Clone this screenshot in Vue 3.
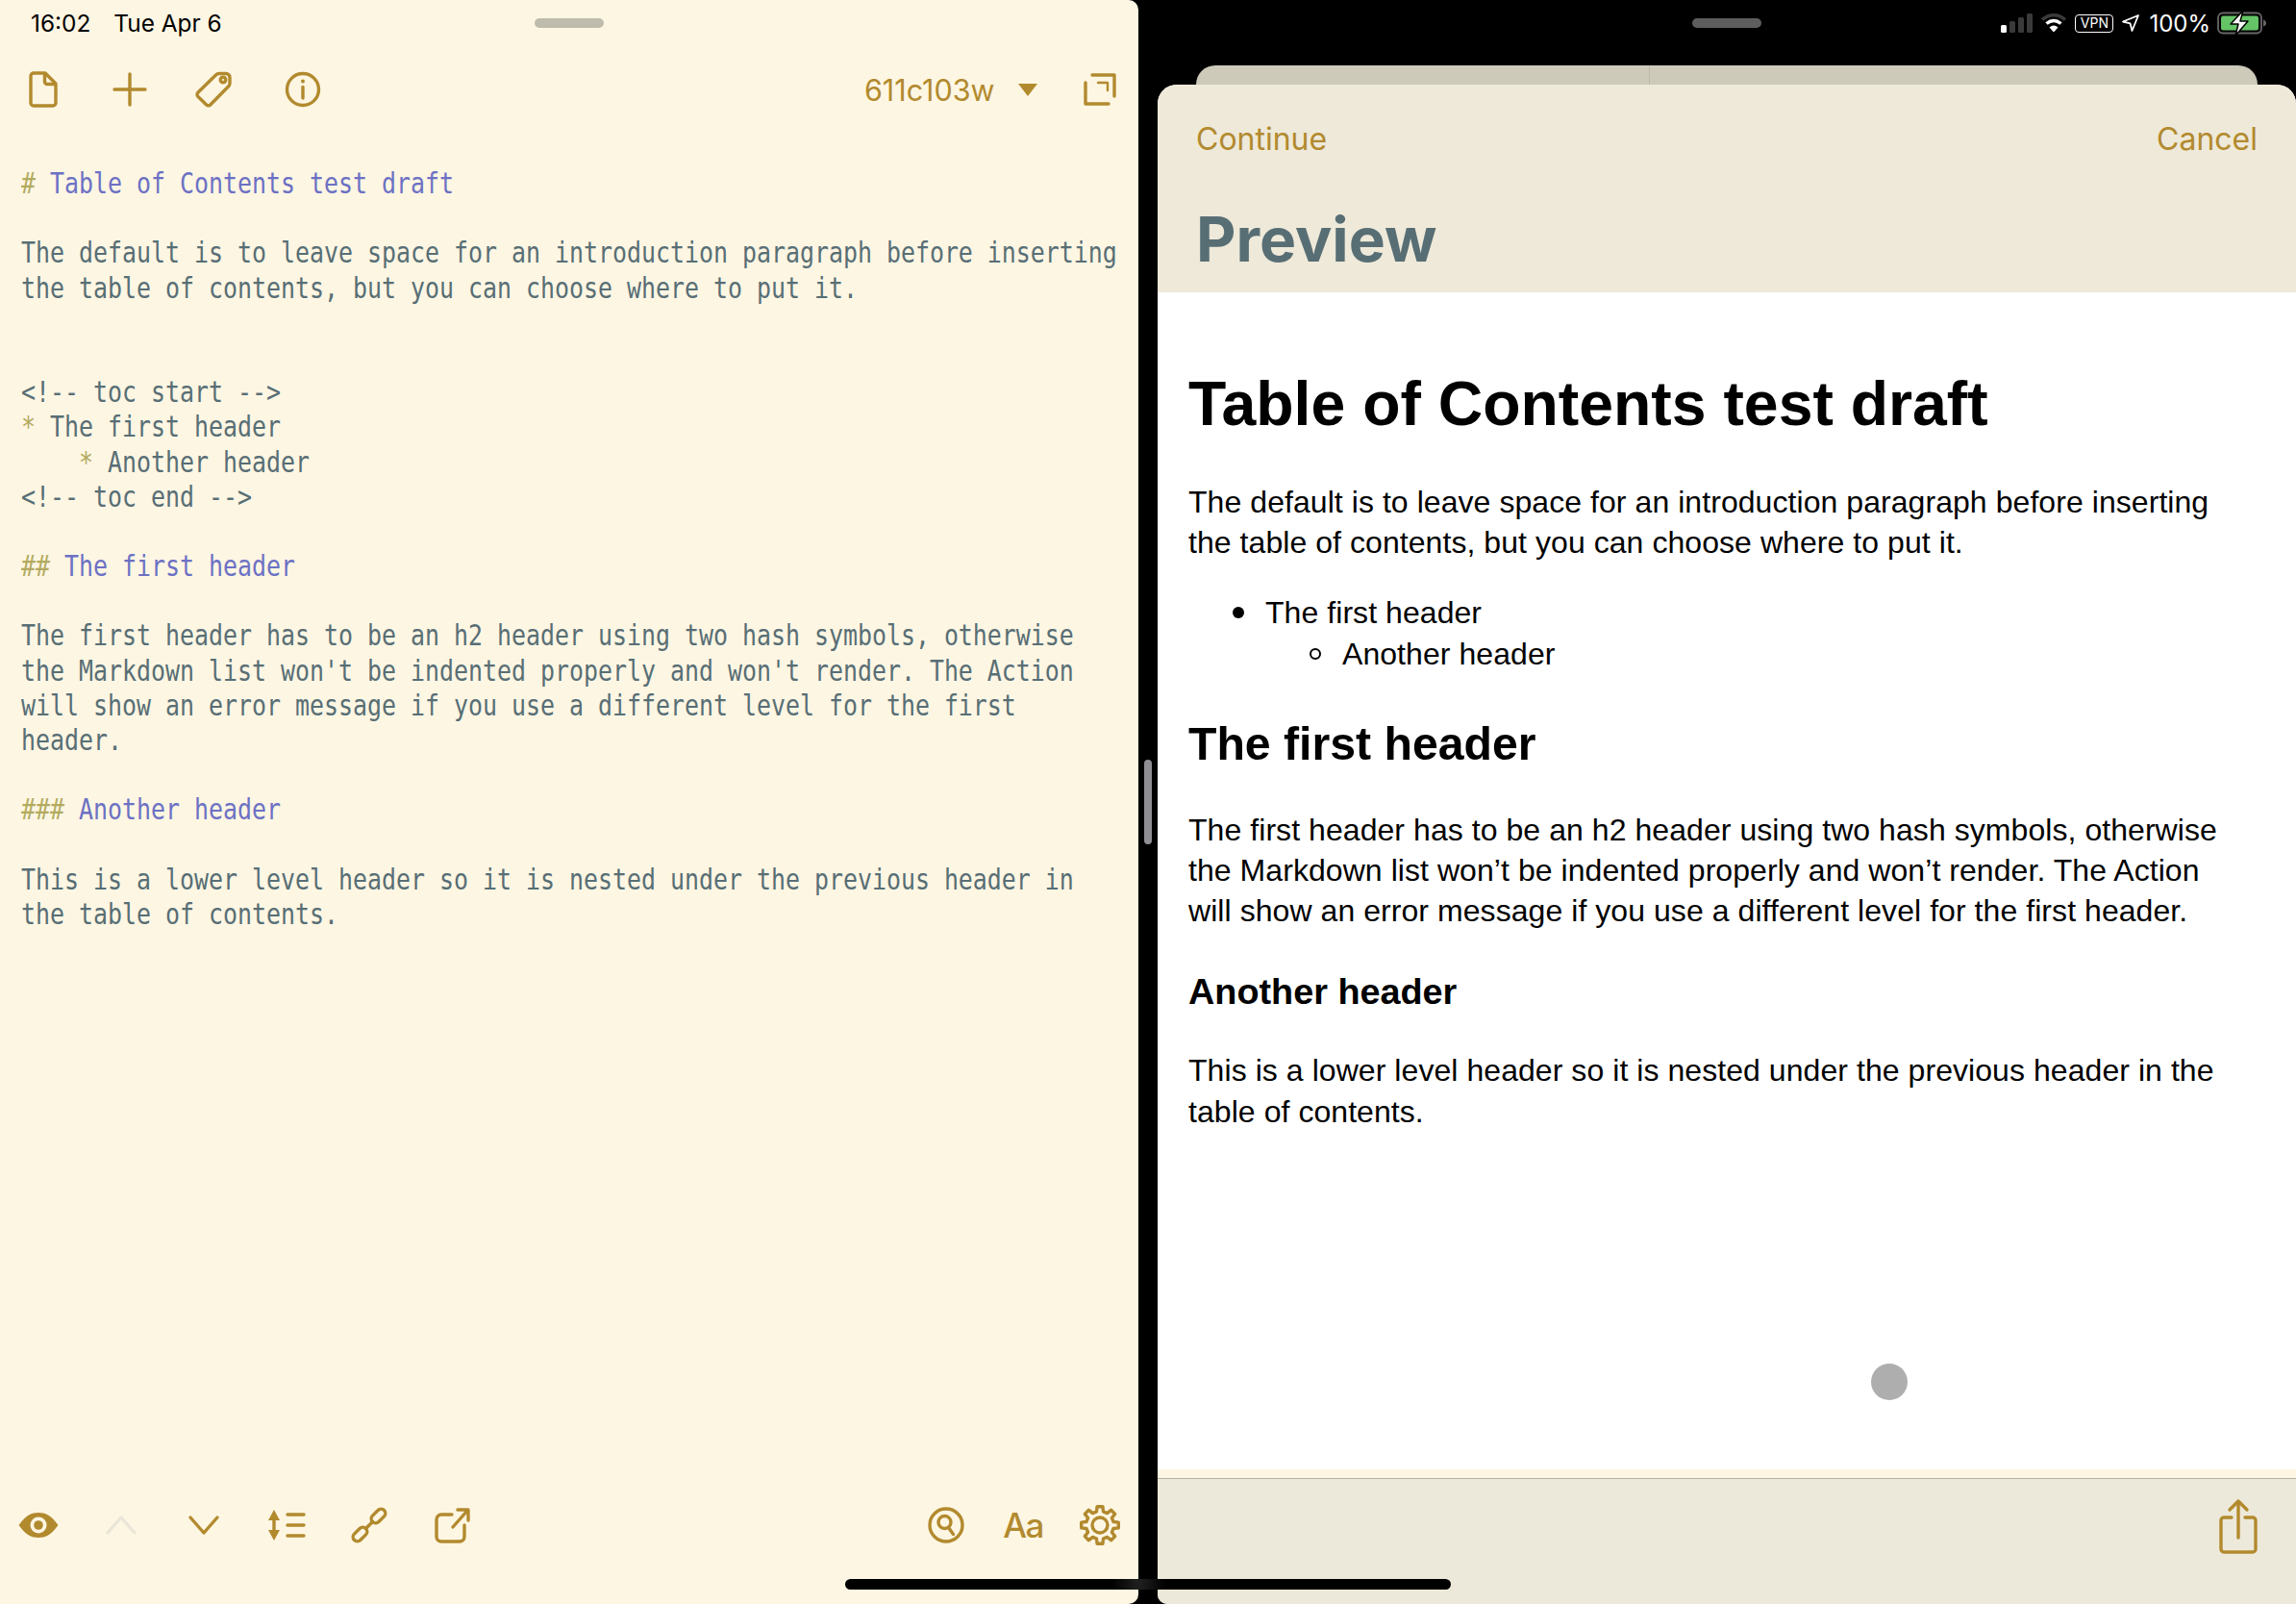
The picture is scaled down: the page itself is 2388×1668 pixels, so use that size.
<script setup>
const lines = [
  [['y', '# '], ['v', 'Table of Contents test draft']],
  [],
  [['t', 'The default is to leave space for an introduction paragraph before inserting']],
  [['t', 'the table of contents, but you can choose where to put it.']],
  [], [],
  [['t', '<!-- toc start -->']],
  [['y', '* '], ['t', 'The first header']],
  [['t', '    '], ['y', '* '], ['t', 'Another header']],
  [['t', '<!-- toc end -->']],
  [],
  [['y', '## '], ['v', 'The first header']],
  [],
  [['t', "The first header has to be an h2 header using two hash symbols, otherwise"]],
  [['t', "the Markdown list won't be indented properly and won't render. The Action"]],
  [['t', 'will show an error message if you use a different level for the first']],
  [['t', 'header.']],
  [],
  [['y', '### '], ['v', 'Another header']],
  [],
  [['t', 'This is a lower level header so it is nested under the previous header in']],
  [['t', 'the table of contents.']],
]

function gearPath() {
  const teeth = 8, cx = 21, cy = 21, ro = 19.5, ri = 14.5
  let d = ''
  for (let i = 0; i < teeth; i++) {
    const a = (i / teeth) * Math.PI * 2 - Math.PI / 2
    const s = Math.PI / teeth
    const pts = [
      [ri, a - s * 0.62], [ro, a - s * 0.38], [ro, a + s * 0.38], [ri, a + s * 0.62],
    ]
    pts.forEach(([r, t], j) => {
      const x = (cx + r * Math.cos(t)).toFixed(2)
      const y = (cy + r * Math.sin(t)).toFixed(2)
      d += (i === 0 && j === 0 ? 'M' : 'L') + x + ' ' + y + ' '
    })
  }
  return d + 'Z'
}
const gear = gearPath()
</script>

<template>
  <div class="screen">
    <section class="editor-pane">
      <div class="status">
        <div class="clock"><span>16:02</span><span>Tue Apr 6</span></div>
        <i class="grabber light"></i>
        <div></div>
      </div>

      <div class="toolbar top-tools">
        <div class="slots">
          <span class="slot">
            <svg width="30" height="38" viewBox="0 0 30 38"><path d="M5 2h12l11 11v20a3 3 0 0 1-3 3H5a3 3 0 0 1-3-3V5a3 3 0 0 1 3-3zM16.500 2.500V11a2.500 2.500 0 0 0 2.500 2.500h8.500"/></svg>
          </span>
          <span class="slot">
            <svg width="36" height="36" viewBox="0 0 36 36"><path d="M18 2v32M2 18h32"/></svg>
          </span>
          <span class="slot tag-slot">
            <svg width="38" height="38" viewBox="0 0 38 38"><path d="M25 2.500h7a4 4 0 0 1 4 4v6a5 5 0 0 1-1.300 3.300L16 34.800a3 3 0 0 1-4.300.2L3 26.500a3 3 0 0 1-.2-4.200L21.500 4a5 5 0 0 1 3.500-1.500z"/><circle cx="29" cy="9" r="2.800"/></svg>
          </span>
          <span class="slot">
            <svg width="38" height="38" viewBox="0 0 38 38"><circle cx="19" cy="19" r="16.500"/><path d="M19 16.500v11.500"/><circle class="solid" cx="19" cy="10.500" r="2"/></svg>
          </span>
        </div>
        <div class="doc-tools">
          <span class="doc-name">611c103w</span>
          <svg class="caret" width="20" height="13" viewBox="0 0 20 13"><path class="solid" d="M0 0h20l-10 13z"/></svg>
          <svg class="expand" width="34" height="34" viewBox="0 0 34 34"><path d="M9 2h23v22M2 10v22h24"/><path class="thin" d="M15 10h10v8"/></svg>
        </div>
      </div>

      <main class="editor">
        <div class="code">
          <div v-for="(line, i) in lines" :key="i" class="code-line"><span v-for="(part, j) in line" :key="j" :class="part[0]">{{ part[1] }}</span></div>
        </div>
      </main>

      <div class="toolbar bottom-tools">
        <div class="slots small">
          <span class="slot">
            <svg width="42" height="28" viewBox="0 0 42 28"><path class="solid" d="M0.500 14C8 3.500 14 1 21 1s13 2.500 20.500 13C34 24.500 28 27 21 27S8 24.500 0.500 14z"/><circle class="hole" cx="21" cy="14" r="8.500"/><circle class="solid" cx="21" cy="14" r="4.800"/></svg>
          </span>
          <span class="slot">
            <svg class="faded" width="32" height="20" viewBox="0 0 32 20"><path d="M2 18L16 2l14 16"/></svg>
          </span>
          <span class="slot">
            <svg width="32" height="20" viewBox="0 0 32 20"><path d="M2 2l14 16L30 2"/></svg>
          </span>
          <span class="slot">
            <svg width="38" height="32" viewBox="0 0 38 32"><path class="solid" d="M6 0l6 11H0zM6 32l6-11H0z"/><path d="M6 10v12M20 5h17M20 16h17M20 27h17"/></svg>
          </span>
          <span class="slot">
            <svg width="38" height="38" viewBox="0 0 38 38"><rect x="24" y="1" width="9" height="17" rx="4.500" transform="rotate(45 28.500 9.500)"/><rect x="5" y="20" width="9" height="17" rx="4.500" transform="rotate(45 9.500 28.500)"/><path d="M15.500 22.500l7-7"/></svg>
          </span>
          <span class="slot">
            <svg width="36" height="36" viewBox="0 0 36 36"><path d="M18 7H7a5 5 0 0 0-5 5v18a5 5 0 0 0 5 5h19a5 5 0 0 0 5-5V18M19 20L34 3M24 2h11v11"/></svg>
          </span>
        </div>
        <div class="slots right-slots">
          <span class="slot">
            <svg width="38" height="38" viewBox="0 0 38 38"><circle cx="19" cy="19" r="17"/><circle cx="17.500" cy="16" r="6.500"/><path d="M21.500 21.500l5 7"/></svg>
          </span>
          <span class="slot aa">Aa</span>
          <span class="slot">
            <svg width="42" height="42" viewBox="0 0 42 42"><path :d="gear"/><circle cx="21" cy="21" r="8"/></svg>
          </span>
        </div>
      </div>
    </section>

    <div class="divider"><i class="handle"></i></div>

    <section class="preview-pane">
      <div class="status">
        <div></div>
        <i class="grabber dark"></i>
        <div class="indicators">
          <svg class="signal" width="33" height="20" viewBox="0 0 33 20"><rect x="0" y="12" width="6" height="8" rx="1.500" fill="#fff"/><rect x="9" y="8" width="6" height="12" rx="1.500" fill="#3a3a3a"/><rect x="18" y="4" width="6" height="16" rx="1.500" fill="#3a3a3a"/><rect x="27" y="0" width="6" height="20" rx="1.500" fill="#3a3a3a"/></svg>
          <svg class="wifi" width="28" height="20" viewBox="0 0 28 20"><path d="M2 6.500C9.500 0 18.500 0 26 6.500" stroke="#3a3a3a" stroke-width="3.500" stroke-linecap="butt" fill="none"/><path d="M6.500 10.500C11.500 6.500 16.500 6.500 21.500 10.500" stroke="#fff" stroke-width="3.500" stroke-linecap="butt" fill="none"/><path d="M9.500 14.500Q14 10.500 18.500 14.500L14 19.500z" fill="#fff"/></svg>
          <span class="vpn">VPN</span>
          <svg class="arrow" width="18" height="18" viewBox="0 0 18 18"><path d="M17 1L1 7.500l7.500 1.800L10.500 17z" stroke="#fff" stroke-width="1.800" fill="none"/></svg>
          <span class="percent">100%</span>
          <svg class="battery" width="52" height="26" viewBox="0 0 52 26"><rect x="1" y="2.500" width="45" height="21" rx="5" fill="none" stroke="#666" stroke-width="1.800"/><rect x="4" y="5.500" width="39" height="15" rx="2.500" fill="#65c466"/><path d="M48 9.500q3 1 3 3.500t-3 3.500z" fill="#666"/><path d="M27 0L14 14h8l-3 12 13-15h-8z" fill="#fff" stroke="#000" stroke-width="1.500"/></svg>
        </div>
      </div>

      <div class="back-card"><i></i></div>

      <div class="sheet">
        <header class="sheet-head">
          <div class="sheet-nav"><span>Continue</span><span>Cancel</span></div>
          <h2 class="sheet-title">Preview</h2>
        </header>
        <article class="doc">
          <h1>Table of Contents test draft</h1>
          <p class="intro">The default is to leave space for an introduction paragraph before inserting the table of contents, but you can choose where to put it.</p>
          <ul>
            <li>The first header
              <ul><li>Another header</li></ul>
            </li>
          </ul>
          <h2>The first header</h2>
          <p class="first">The first header has to be an h2 header using two hash symbols, otherwise the Markdown list won’t be indented properly and won’t render. The Action will show an error message if you use a different level for the first header.</p>
          <h3>Another header</h3>
          <p class="last">This is a lower level header so it is nested under the previous header in the table of contents.</p>
          <i class="touch"></i>
        </article>
        <footer class="sheet-foot">
          <svg width="40" height="56" viewBox="0 0 40 56"><path d="M13 19H5a3 3 0 0 0-3 3v30a3 3 0 0 0 3 3h30a3 3 0 0 0 3-3V22a3 3 0 0 0-3-3h-8M20 2v38M11 11l9-9 9 9"/></svg>
        </footer>
      </div>
    </section>

    <i class="home-bar"></i>
  </div>
</template>

<style scoped>
.screen {
  position: relative;
  display: flex;
  width: 2388px;
  height: 1668px;
  overflow: hidden;
  background: #000;
  font-family: Inter, "Liberation Sans", sans-serif;
}

svg {
  display: block;
  overflow: visible;
  fill: none;
  stroke: #b28a2e;
  stroke-width: 3.4;
  stroke-linecap: round;
  stroke-linejoin: round;
}
svg .solid { fill: #b28a2e; stroke: none; }
svg .hole { fill: #fdf6e3; stroke: none; }
svg .thin { stroke-width: 2.400; }
svg.faded { stroke: #e9e6d8; }
.indicators svg { stroke: none; }

/* left pane */
.editor-pane {
  display: flex;
  flex-direction: column;
  flex: 0 0 1184px;
  min-width: 0;
  overflow: hidden;
  background: #fdf6e3;
  border-radius: 0 10px 10px 0;
}

.status {
  display: grid;
  grid-template-columns: 1fr auto 1fr;
  align-items: center;
  height: 48px;
  flex: none;
}
.clock {
  display: flex;
  gap: 24px;
  padding-left: 32px;
  font-size: 24.400px;
  color: #000;
}
.grabber {
  display: block;
  width: 72px;
  height: 10px;
  border-radius: 5px;
}
.grabber.light { background: #bfbbad; }
.grabber.dark { background: #5d5d5d; }

.toolbar {
  display: flex;
  align-items: center;
  justify-content: space-between;
  flex: none;
}
.top-tools { height: 90px; }
.slots { display: flex; }
.slot {
  display: flex;
  align-items: center;
  justify-content: center;
  width: 90px;
}
.tag-slot { margin-right: 3px; margin-left: -3px; }
.slots.small .slot { width: 86px; }
.slots.small { margin-left: -3px; }
.right-slots .slot { width: 80px; }
.doc-tools {
  display: flex;
  align-items: center;
  padding-right: 23px;
}
.doc-name { font-size: 30.500px; color: #b28a2e; }
.caret { margin: 0 48px 0 24.500px; }

.editor {
  flex: 1;
  min-height: 0;
  padding: 34px 0 0 22px;
  overflow: hidden;
}
.code {
  width: 1420px;
  transform: scaleX(0.8036);
  transform-origin: 0 0;
  font-family: "DejaVu Sans Mono", "Liberation Mono", monospace;
  font-size: 31px;
  line-height: 36.200px;
  white-space: pre;
  color: #586e75;
}
.code-line { height: 36.200px; }
.v { color: #6c71c4; }
.y { color: #b3ab5f; }
.t { color: #586e75; }

.bottom-tools {
  height: 80px;
  margin-bottom: 42px;
}
.aa {
  font-size: 35px;
  font-weight: 500;
  letter-spacing: -1.500px;
  color: #b28a2e;
}

/* divider */
.divider {
  display: flex;
  align-items: center;
  justify-content: center;
  flex: 0 0 20px;
}
.handle {
  display: block;
  width: 8px;
  height: 88px;
  border-radius: 4px;
  background: #8e8e93;
}

/* right pane */
.preview-pane {
  display: flex;
  flex-direction: column;
  flex: 1;
  min-width: 0;
}
.indicators {
  display: flex;
  align-items: center;
  justify-content: flex-end;
  padding-right: 30px;
  color: #fff;
}
.signal { margin-right: 8px; }
.wifi { margin-right: 8px; }
.vpn {
  width: 40px;
  height: 19px;
  border: 1.500px solid #fff;
  border-radius: 4px;
  box-sizing: border-box;
  font-size: 14px;
  line-height: 16px;
  text-align: center;
  margin-right: 9px;
}
.arrow { margin-right: 10px; }
.percent { font-size: 24px; margin-right: 7px; }

.back-card {
  display: flex;
  flex: none;
  height: 20px;
  margin: 20px 40px 0;
  border-radius: 20px 20px 0 0;
  background: #cdcaba;
}
.back-card i { width: 1px; margin-left: 471px; background: #bdb9aa; }

.sheet {
  display: flex;
  flex-direction: column;
  flex: 1;
  min-height: 0;
  overflow: hidden;
  border-radius: 20px 20px 0 10px;
  background: #fff;
}
.sheet-head {
  flex: none;
  height: 216px;
  box-sizing: border-box;
  padding: 36px 40px 0;
  background: #eee9d9;
}
.sheet-nav {
  display: flex;
  justify-content: space-between;
  font-size: 32px;
  line-height: 42px;
  color: #b28a2e;
}
.sheet-title {
  margin: 43px 0 0;
  font-size: 64px;
  line-height: 80px;
  font-weight: 700;
  color: #586e75;
}

.doc {
  position: relative;
  flex: 1;
  min-height: 0;
  padding: 80px 58px 0 32px;
  font-family: "Liberation Sans", Arial, sans-serif;
  font-size: 32px;
  line-height: 42.200px;
  letter-spacing: 0.06px;
  color: #000;
}
.doc h1 { margin: 0 -40px 45px 0; font-size: 64.350px; line-height: 72px; letter-spacing: 0; }
.doc h2 { margin: 44px 0 41px; font-size: 48.200px; line-height: 56px; letter-spacing: 0; }
.doc h3 { margin: 41px 0 39px; font-size: 37.800px; line-height: 44px; letter-spacing: 0; }
.doc p { margin: 0; }
.doc ul { list-style: none; }
.doc > ul { margin: 31px 0 0; padding-left: 80px; }
.doc ul ul { margin: 0; padding-left: 80px; }
.doc li { position: relative; }
.doc li::before {
  content: "";
  position: absolute;
  left: -34px;
  top: 15px;
  width: 12px;
  height: 12px;
  box-sizing: border-box;
  border-radius: 50%;
  background: #000;
}
.doc ul ul li::before {
  background: transparent;
  border: 2px solid #000;
}
.touch {
  position: absolute;
  left: 742px;
  top: 1114px;
  width: 38px;
  height: 38px;
  border-radius: 50%;
  background: #aeaeae;
}

.sheet-foot {
  display: flex;
  align-items: flex-start;
  justify-content: flex-end;
  flex: none;
  height: 131px;
  box-sizing: border-box;
  padding: 21px 40px 0;
  border-top: 1.500px solid #b5b1a3;
  background: #ede9da;
  box-shadow: 0 -9px 0 #fdf6e3;
}

.home-bar {
  position: absolute;
  left: 879px;
  top: 1642px;
  width: 630px;
  height: 11px;
  border-radius: 6px;
  background: linear-gradient(90deg, #000 0 44%, #1d1d1d 48%, #1d1d1d 49%, #000 53%);
}
</style>
